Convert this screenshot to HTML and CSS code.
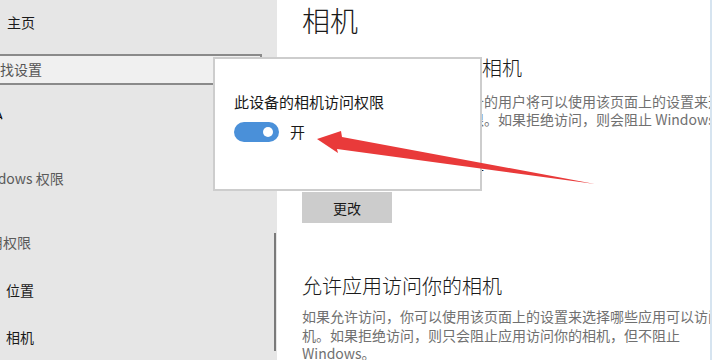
FILE: index.html
```html
<!DOCTYPE html>
<html lang="zh-CN">
<head>
<meta charset="utf-8">
<link rel="stylesheet" href="styles.css">
</head>
<body>
<div class="page">
  <aside class="sidebar">
    <div class="nav-home">主页</div>
    <div class="search"><span class="search-text">查找设置</span></div>
    <div class="nav-group clip-heading"><span class="shift-heading">隐私</span></div>
    <div class="nav-group muted"><span class="shift-win">Windows 权限</span></div>
    <div class="nav-group muted second"><span class="shift-app">应用权限</span></div>
    <div class="nav-item first">位置</div>
    <div class="nav-item">相机</div>
    <div class="scrollbar"></div>
  </aside>
  <main class="content">
    <h1 class="title">相机</h1>
    <h2 class="subtitle">允许访问此设备上的相机</h2>
    <p class="desc">
      <span class="line">如果允许访问，则使用此设备的用户将可以使用该页面上的设置来选择其应用是否具有相机访问权限</span>
      <span class="line">择应用是否具有相机访问权限。如果拒绝访问，则会阻止 Windows 功能、Microsoft Store 应用</span>
    </p>
    <p class="status">此设备的相机访问权限已打开</p>
    <button class="btn">更改</button>
    <h2 class="subtitle second">允许应用访问你的相机</h2>
    <p class="desc para">
      <span class="line">如果允许访问，你可以使用该页面上的设置来选择哪些应用可以访问你的相</span>
      <span class="line">机。如果拒绝访问，则只会阻止应用访问你的相机，但不阻止</span>
      <span class="line">Windows。</span>
    </p>
  </main>
  <div class="popup">
    <div class="popup-label">此设备的相机访问权限</div>
    <div class="toggle-row">
      <span class="toggle"><span class="knob"></span></span>
      <span class="toggle-text">开</span>
    </div>
  </div>
  <svg class="arrow" width="290" height="70" viewBox="0 0 290 70">
    <polygon points="7,19 31,11 32,17 285,64 27,29 28,33" fill="#e93a3a"/>
  </svg>
</div>
</body>
</html>
```

FILE: styles.css
```css
* { box-sizing: border-box; }
html, body { margin: 0; padding: 0; }
body {
  width: 712px;
  height: 360px;
  overflow: hidden;
  font-family: "Noto Sans CJK SC", "Noto Sans", sans-serif;
  color: #1a1a1a;
  background: #fff;
}
.page {
  position: relative;
  display: flex;
  width: 712px;
  height: 360px;
}
.sidebar {
  position: relative;
  width: 277px;
  flex: none;
  background: #e6e6e6;
  overflow: hidden;
  font-size: 14px;
}
.nav-home {
  height: 44px;
  line-height: 44px;
  padding-left: 7px;
  color: #1a1a1a;
}
.search {
  margin-top: 10px;
  width: 262px;
  height: 31px;
  border-top: 2px solid #8a8a8a;
  border-bottom: 2px solid #8a8a8a;
  border-right: 2px solid #8a8a8a;
  background: #f0f0f0;
  line-height: 27px;
  color: #555;
  white-space: nowrap;
  overflow: hidden;
}
.search-text { margin-left: -14px; }
.nav-group {
  line-height: 20px;
  height: 20px;
  white-space: nowrap;
}
.clip-heading { margin-top: 17px; font-size: 15px; color: #000; }
.shift-heading { margin-left: -27px; }
.muted { color: #5a5a5a; margin-top: 46px; }
.muted.second { margin-top: 44px; }
.shift-win { margin-left: -27px; }
.shift-app { margin-left: -25px; }
.nav-item {
  line-height: 20px;
  height: 20px;
  padding-left: 6px;
  margin-top: 27px;
  color: #1a1a1a;
}
.nav-item.first { margin-top: 28px; }
.scrollbar {
  position: absolute;
  left: 274px;
  top: 233px;
  width: 2px;
  height: 118px;
  background: #7a7a7a;
}
.content {
  flex: 1;
  padding-left: 25px;
  border-right: 2px solid #d6e4f0;
  overflow: hidden;
  white-space: nowrap;
}
.title {
  margin: 0;
  font-size: 28px;
  font-weight: 300;
  line-height: 40px;
  color: #1a1a1a;
}
.subtitle {
  margin: 14px 0 0;
  font-size: 20px;
  font-weight: 300;
  line-height: 28px;
  color: #1a1a1a;
}
.subtitle.second { margin-top: 49px; }
.desc {
  margin: 10px 0 0;
  font-size: 14px;
  line-height: 18px;
  color: #707070;
}
.desc.para { margin-top: 7px; line-height: 18.5px; }
.line { display: block; }
.status {
  margin: 33px 0 0;
  font-size: 14px;
  line-height: 18px;
  color: #1a1a1a;
}
.btn {
  display: block;
  margin-top: 13px;
  width: 90px;
  height: 31px;
  border: none;
  background: #cccccc;
  font-family: inherit;
  font-size: 14px;
  color: #1a1a1a;
  padding: 0;
}
.popup {
  position: absolute;
  left: 213px;
  top: 57px;
  width: 269px;
  height: 134px;
  background: #fff;
  border: 2px solid #cdcdcd;
  padding: 33px 0 0 19px;
}
.popup-label {
  font-size: 15px;
  line-height: 20px;
  color: #1a1a1a;
}
.toggle-row {
  display: flex;
  align-items: center;
  gap: 11px;
  margin-top: 10px;
  height: 20px;
}
.toggle {
  width: 45px;
  height: 20px;
  border-radius: 10px;
  background: #4a90d9;
  display: flex;
  align-items: center;
  justify-content: flex-end;
  padding-right: 6px;
}
.knob {
  width: 10px;
  height: 10px;
  border-radius: 50%;
  background: #fff;
}
.toggle-text {
  font-size: 15px;
  line-height: 20px;
  color: #1a1a1a;
}
.arrow {
  position: absolute;
  left: 310px;
  top: 120px;
}
```
